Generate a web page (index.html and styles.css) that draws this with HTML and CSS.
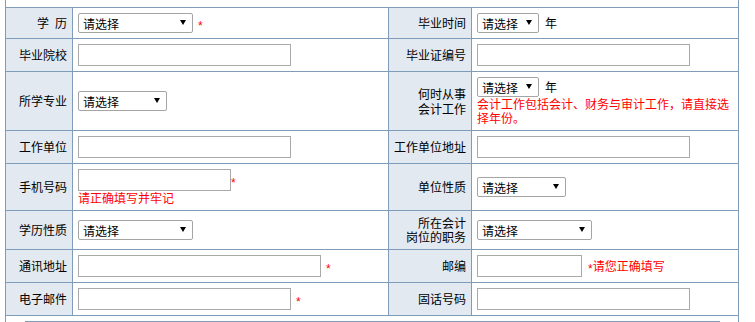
FILE: index.html
```html
<!DOCTYPE html>
<html lang="zh-CN">
<head>
<meta charset="utf-8">
<title>学历信息</title>
<link rel="stylesheet" href="styles.css">
</head>
<body>
<div class="form">
  <div class="full head"></div>

  <div class="lab">学&ensp;历</div>
  <div class="val"><span class="sel"><select class="w115"><option>请选择</option></select><svg class="arr" viewBox="0 0 6 5"><polygon points="0,0 6,0 3,5"/></svg></span><span class="req gap">*</span></div>
  <div class="lab">毕业时间</div>
  <div class="val"><span class="sel"><select class="w62"><option>请选择</option></select><svg class="arr" viewBox="0 0 6 5"><polygon points="0,0 6,0 3,5"/></svg></span><span class="unit">年</span></div>

  <div class="lab">毕业院校</div>
  <div class="val"><input type="text" class="w213"></div>
  <div class="lab">毕业证编号</div>
  <div class="val"><input type="text" class="w213"></div>

  <div class="lab">所学专业</div>
  <div class="val"><span class="sel"><select class="w89"><option>请选择</option></select><svg class="arr" viewBox="0 0 6 5"><polygon points="0,0 6,0 3,5"/></svg></span></div>
  <div class="lab tall">何时从事<br>会计工作</div>
  <div class="val">
    <div class="stack">
      <div class="line"><span class="sel"><select class="w62"><option>请选择</option></select><svg class="arr" viewBox="0 0 6 5"><polygon points="0,0 6,0 3,5"/></svg></span><span class="unit">年</span></div>
      <div class="hint">会计工作包括会计、财务与审计工作，请直接选择年份。</div>
    </div>
  </div>

  <div class="lab">工作单位</div>
  <div class="val"><input type="text" class="w213"></div>
  <div class="lab">工作单位地址</div>
  <div class="val"><input type="text" class="w213"></div>

  <div class="lab">手机号码</div>
  <div class="val">
    <div class="stack">
      <div class="line"><input type="text" class="w153"><span class="req">*</span></div>
      <div class="hint">请正确填写并牢记</div>
    </div>
  </div>
  <div class="lab">单位性质</div>
  <div class="val"><span class="sel"><select class="w89"><option>请选择</option></select><svg class="arr" viewBox="0 0 6 5"><polygon points="0,0 6,0 3,5"/></svg></span></div>

  <div class="lab">学历性质</div>
  <div class="val"><span class="sel"><select class="w115"><option>请选择</option></select><svg class="arr" viewBox="0 0 6 5"><polygon points="0,0 6,0 3,5"/></svg></span></div>
  <div class="lab">所在会计<br>岗位的职务</div>
  <div class="val"><span class="sel"><select class="w115"><option>请选择</option></select><svg class="arr" viewBox="0 0 6 5"><polygon points="0,0 6,0 3,5"/></svg></span></div>

  <div class="lab">通讯地址</div>
  <div class="val"><input type="text" class="w243"><span class="req gap">*</span></div>
  <div class="lab">邮编</div>
  <div class="val"><input type="text" class="w105"><span class="req gap6">*</span><span class="note">请您正确填写</span></div>

  <div class="lab">电子邮件</div>
  <div class="val"><input type="text" class="w213"><span class="req gap">*</span></div>
  <div class="lab">固话号码</div>
  <div class="val"><input type="text" class="w213"></div>

  <div class="full foot"><div class="inner"></div></div>
</div>
</body>
</html>
```

FILE: styles.css
```css
html, body {
  margin: 0;
  padding: 0;
  background: #fff;
}

body {
  font: 12px "Noto Sans CJK SC", "Liberation Sans", sans-serif;
  color: #000;
  overflow: hidden;
}

.form {
  display: grid;
  grid-template-columns: 67px 316px 83px 267px;
  width: 733px;
  margin: -22px 0 0 5px;
  border-left: 1px solid #7f9db9;
}

.form > div {
  box-sizing: border-box;
  border-right: 1px solid #7f9db9;
  border-bottom: 1px solid #7f9db9;
  padding: 5px;
  line-height: 14px;
}

.full {
  grid-column: 1 / -1;
}

.head {
  height: 30px;
}

.lab {
  background: #e3e9f0;
  display: flex;
  align-items: center;
  justify-content: flex-end;
  text-align: right;
}

.form > .tall {
  line-height: 15px;
}

.val {
  display: flex;
  align-items: center;
}

.stack {
  display: flex;
  flex-direction: column;
  align-items: flex-start;
}

.line {
  display: flex;
  align-items: center;
}

.hint {
  color: #f00;
  line-height: 14px;
}

.sel {
  position: relative;
  display: inline-flex;
}

select {
  -webkit-appearance: none;
  appearance: none;
  box-sizing: border-box;
  height: 20px;
  margin: 0;
  padding: 0 0 0 4px;
  border: 1px solid #a5a5a5;
  border-radius: 2px;
  background: #fff;
  color: #000;
  font: 12px "Noto Sans CJK SC", "Liberation Sans", sans-serif;
  outline: none;
}

.arr {
  position: absolute;
  right: 7px;
  top: 7px;
  width: 6px;
  height: 5px;
  fill: #000;
  pointer-events: none;
}

input[type="text"] {
  box-sizing: border-box;
  height: 22px;
  margin: 0;
  padding: 0 2px;
  border: 1px solid #a9a9a9;
  background: #fff;
  font: 12px "Noto Sans CJK SC", "Liberation Sans", sans-serif;
  outline: none;
}

.w62 { width: 62px; }
.w89 { width: 89px; }
.w115 { width: 115px; }
.w105 { width: 105px; }
.w153 { width: 153px; }
.w213 { width: 213px; }
.w243 { width: 243px; }

.unit {
  margin-left: 6px;
}

.req {
  color: #f00;
  font: 12px "Liberation Sans", sans-serif;
  line-height: 14px;
  padding-top: 6px;
}

.gap {
  margin-left: 5px;
}

.gap6 {
  margin-left: 6px;
}

.note {
  color: #f00;
}

.foot {
  height: 40px;
}

.inner {
  width: 695px;
  height: 30px;
  margin-left: 14px;
  border-top: 1px solid #7f9db9;
}
```
